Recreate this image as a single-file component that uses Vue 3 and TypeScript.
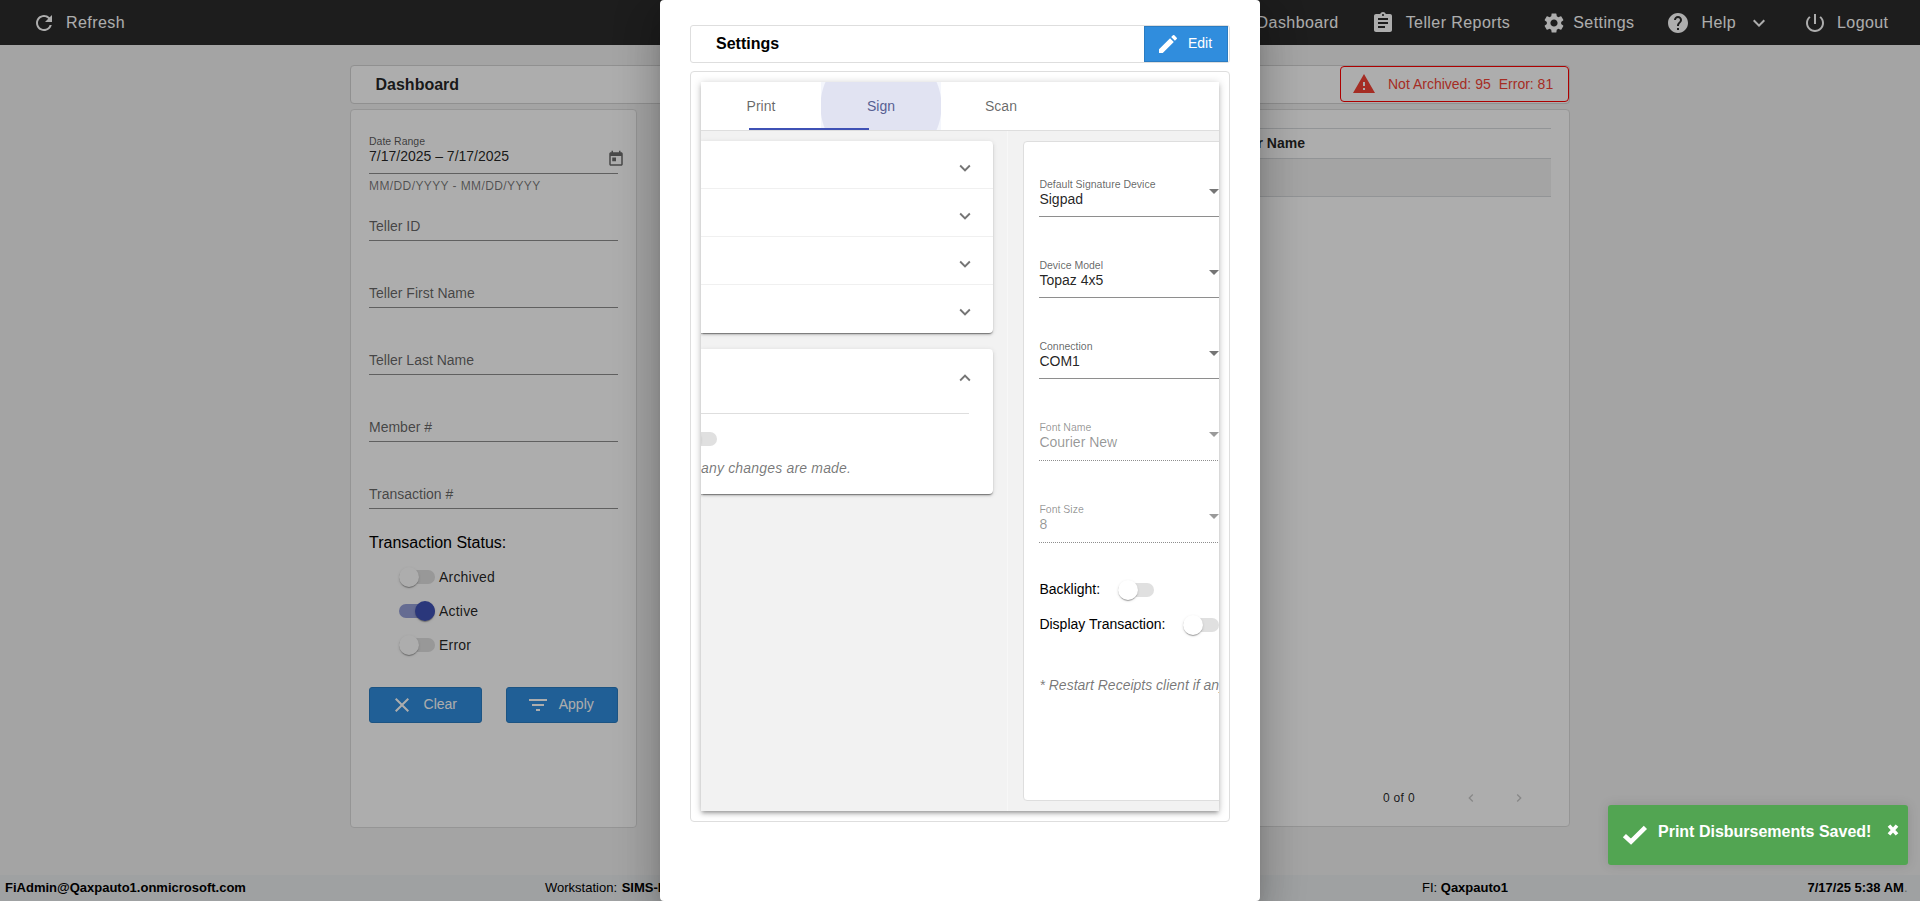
<script setup lang="ts">
interface NavItem {
  label: string
  icon: string
  cls: string
  caret?: boolean
}
interface SelectField {
  label: string
  value: string
  disabled?: boolean
}

const icons = {
  refresh:
    'M17.65 6.35A7.958 7.958 0 0 0 12 4c-4.42 0-7.99 3.58-7.99 8s3.57 8 7.99 8c3.73 0 6.84-2.55 7.73-6h-2.08A5.99 5.99 0 0 1 12 18c-3.31 0-6-2.69-6-6s2.69-6 6-6c1.66 0 3.14.69 4.22 1.78L13 11h7V4l-2.35 2.35z',
  dashboard: 'M3 13h8V3H3v10zm0 8h8v-6H3v6zm10 0h8V11h-8v10zm0-18v6h8V3h-8z',
  reports:
    'M19 3h-4.18C14.4 1.84 13.3 1 12 1s-2.4.84-2.82 2H5c-1.1 0-2 .9-2 2v14c0 1.1.9 2 2 2h14c1.1 0 2-.9 2-2V5c0-1.1-.9-2-2-2zm-7 0c.55 0 1 .45 1 1s-.45 1-1 1-1-.45-1-1 .45-1 1-1zm2 14H7v-2h7v2zm3-4H7v-2h10v2zm0-4H7V7h10v2z',
  settings:
    'M19.14 12.94c.04-.3.06-.61.06-.94 0-.32-.02-.64-.07-.94l2.03-1.58a.49.49 0 0 0 .12-.61l-1.92-3.32a.488.488 0 0 0-.59-.22l-2.39.96c-.5-.38-1.03-.7-1.62-.94l-.36-2.54a.484.484 0 0 0-.48-.41h-3.84c-.24 0-.43.17-.47.41l-.36 2.54c-.59.24-1.13.57-1.62.94l-2.39-.96c-.22-.08-.47 0-.59.22L2.74 8.87c-.12.21-.08.47.12.61l2.03 1.58c-.05.3-.09.63-.09.94s.02.64.07.94l-2.03 1.58a.49.49 0 0 0-.12.61l1.92 3.32c.12.22.37.29.59.22l2.39-.96c.5.38 1.03.7 1.62.94l.36 2.54c.05.24.24.41.48.41h3.84c.24 0 .44-.17.47-.41l.36-2.54c.59-.24 1.13-.56 1.62-.94l2.39.96c.22.08.47 0 .59-.22l1.92-3.32c.12-.22.07-.47-.12-.61l-2.01-1.58zM12 15.6c-1.98 0-3.6-1.62-3.6-3.6s1.62-3.6 3.6-3.6 3.6 1.62 3.6 3.6-1.62 3.6-3.6 3.6z',
  help: 'M12 2C6.48 2 2 6.48 2 12s4.48 10 10 10 10-4.48 10-10S17.52 2 12 2zm1 17h-2v-2h2v2zm2.07-7.75l-.9.92C13.45 12.9 13 13.5 13 15h-2v-.5c0-1.1.45-2.1 1.17-2.83l1.24-1.26c.37-.36.59-.86.59-1.41 0-1.1-.9-2-2-2s-2 .9-2 2H8c0-2.21 1.79-4 4-4s4 1.79 4 4c0 .88-.36 1.68-.93 2.25z',
  logout:
    'M13 3h-2v10h2V3zm4.83 2.17l-1.42 1.42C17.99 7.86 19 9.81 19 12c0 3.87-3.13 7-7 7s-7-3.13-7-7c0-2.19 1.01-4.14 2.58-5.42L6.17 5.17C4.23 6.82 3 9.26 3 12c0 4.97 4.03 9 9 9s9-4.03 9-9c0-2.74-1.23-5.18-3.17-6.83z',
  expand: 'M16.59 8.59L12 13.17 7.41 8.59 6 10l6 6 6-6z',
  collapse: 'M12 8l-6 6 1.41 1.41L12 10.83l4.59 4.58L18 14z',
  warning: 'M1 21h22L12 2 1 21zm12-3h-2v-2h2v2zm0-4h-2v-4h2v4z',
  today:
    'M19 3h-1V1h-2v2H8V1H6v2H5c-1.11 0-1.99.9-1.99 2L3 19c0 1.1.89 2 2 2h14c1.1 0 2-.9 2-2V5c0-1.1-.9-2-2-2zm0 16H5V8h14v11zM7 10h5v5H7z',
  close: 'M19 6.41L17.59 5 12 10.59 6.41 5 5 6.41 10.59 12 5 17.59 6.41 19 12 13.41 17.59 19 19 17.59 13.41 12z',
  filter: 'M10 18h4v-2h-4v2zM3 6v2h18V6H3zm3 7h12v-2H6v2z',
  edit: 'M3 17.25V21h3.75L17.81 9.94l-3.75-3.75L3 17.25zM20.71 7.04a.996.996 0 0 0 0-1.41l-2.34-2.34a.996.996 0 0 0-1.41 0l-1.83 1.83 3.75 3.75 1.83-1.83z',
  prev: 'M15.41 7.41L14 6l-6 6 6 6 1.41-1.41L10.83 12z',
  next: 'M10 6L8.59 7.41 13.17 12l-4.58 4.59L10 18l6-6z',
}

const nav: NavItem[] = [
  { label: 'Dashboard', icon: icons.dashboard, cls: 'n-dash' },
  { label: 'Teller Reports', icon: icons.reports, cls: 'n-rep' },
  { label: 'Settings', icon: icons.settings, cls: 'n-set' },
  { label: 'Help', icon: icons.help, cls: 'n-help', caret: true },
  { label: 'Logout', icon: icons.logout, cls: 'n-out' },
]
const filters = ['Teller ID', 'Teller First Name', 'Teller Last Name', 'Member #', 'Transaction #']
const statuses = [
  { label: 'Archived', on: false },
  { label: 'Active', on: true },
  { label: 'Error', on: false },
]
const selects: SelectField[] = [
  { label: 'Default Signature Device', value: 'Sigpad' },
  { label: 'Device Model', value: 'Topaz 4x5' },
  { label: 'Connection', value: 'COM1' },
  { label: 'Font Name', value: 'Courier New', disabled: true },
  { label: 'Font Size', value: '8', disabled: true },
]
</script>

<template>
  <div class="app">
    <header class="topbar">
      <div class="refresh">
        <svg class="ic" viewBox="0 0 24 24"><path :d="icons.refresh" /></svg>
        <span>Refresh</span>
      </div>
      <nav>
        <div v-for="n in nav" :key="n.label" class="nav-item" :class="n.cls">
          <svg class="ic" viewBox="0 0 24 24"><path :d="n.icon" /></svg>
          <span>{{ n.label }}</span>
          <svg v-if="n.caret" class="ic caret" viewBox="0 0 24 24"><path :d="icons.expand" /></svg>
        </div>
      </nav>
    </header>

    <main class="page">
      <div class="title-bar">
        <h1>Dashboard</h1>
        <div class="alert">
          <svg class="ic" viewBox="0 0 24 24"><path :d="icons.warning" /></svg>
          <span>Not Archived: 95</span><span class="err">Error: 81</span>
        </div>
      </div>
      <div class="columns">
        <section class="filters">
          <div class="date">
            <div class="date-label">Date Range</div>
            <div class="date-row">
              <span>7/17/2025 – 7/17/2025</span>
              <svg viewBox="0 0 24 24"><path :d="icons.today" /></svg>
            </div>
            <div class="hint">MM/DD/YYYY - MM/DD/YYYY</div>
          </div>
          <div v-for="f in filters" :key="f" class="field">{{ f }}</div>
          <div class="status-title">Transaction Status:</div>
          <div v-for="s in statuses" :key="s.label" class="status">
            <span class="toggle" :class="{ on: s.on }"><i></i></span>{{ s.label }}
          </div>
          <div class="actions">
            <button class="btn">
              <svg class="ic x" viewBox="0 0 24 24"><path :d="icons.close" /></svg>Clear
            </button>
            <button class="btn">
              <svg class="ic" viewBox="0 0 24 24"><path :d="icons.filter" /></svg>Apply
            </button>
          </div>
        </section>
        <section class="results">
          <div class="thead">Member Name</div>
          <div class="trow"></div>
          <div class="pager">
            <span>0 of 0</span>
            <svg viewBox="0 0 24 24"><path :d="icons.prev" /></svg>
            <svg viewBox="0 0 24 24"><path :d="icons.next" /></svg>
          </div>
        </section>
      </div>
    </main>

    <footer class="statusbar">
      <b>FiAdmin@Qaxpauto1.onmicrosoft.com</b>
      <span>Workstation: <b class="ws">SIMS-I</b></span>
      <span>FI: <b>Qaxpauto1</b></span>
      <span class="time"><b>7/17/25 5:38 AM</b><span class="dot">.</span></span>
    </footer>

    <div class="backdrop">
      <div class="dialog">
        <div class="dialog-title">
          <h2>Settings</h2>
          <button class="btn edit">
            <svg class="ic" viewBox="0 0 24 24"><path :d="icons.edit" /></svg>Edit
          </button>
        </div>
        <div class="dialog-body">
          <div class="tabs-card">
            <div class="tabs">
              <div class="tab">Print</div>
              <div class="tab pressed"><span>Sign</span></div>
              <div class="tab">Scan</div>
              <div class="ink"></div>
            </div>
            <div class="slides">
              <div class="slide-print">
                <div class="accordion">
                  <div v-for="r in 4" :key="r" class="acc-row">
                    <svg viewBox="0 0 24 24"><path :d="icons.expand" /></svg>
                  </div>
                </div>
                <div class="accordion open">
                  <div class="acc-head">
                    <svg viewBox="0 0 24 24"><path :d="icons.collapse" /></svg>
                  </div>
                  <div class="acc-body">
                    <span class="toggle"><i></i></span>
                    <p>any changes are made.</p>
                  </div>
                </div>
              </div>
              <div class="slide-sign">
                <div class="sign-card">
                  <div v-for="s in selects" :key="s.label" class="select" :class="{ disabled: s.disabled }">
                    <div class="s-label">{{ s.label }}</div>
                    <div class="s-value">{{ s.value }}</div>
                    <i class="arrow"></i>
                  </div>
                  <div class="switch">Backlight: <span class="toggle"><i></i></span></div>
                  <div class="switch second">Display Transaction: <span class="toggle"><i></i></span></div>
                  <p class="note">* Restart Receipts client if any</p>
                </div>
              </div>
            </div>
          </div>
        </div>
      </div>
    </div>

    <div class="toast">
      <svg class="check" viewBox="0 0 26 20"><path d="M2.4 10.6 9 16.6 23.4 2.4" /></svg>
      <span>Print Disbursements Saved!</span>
      <svg class="times" viewBox="0 0 12 12"><path d="M2 1.6 10 10.4M10 1.6 2 10.4" /></svg>
    </div>
  </div>
</template>

<style>
html,
body {
  margin: 0;
  overflow: hidden;
}
</style>

<style scoped>
* {
  box-sizing: border-box;
}
.app {
  position: relative;
  width: 1920px;
  height: 901px;
  overflow: hidden;
  display: flex;
  flex-direction: column;
  background: #f2f2f2;
  font: 14px/16px 'Liberation Sans', Arial, sans-serif;
  color: rgba(0, 0, 0, 0.87);
}
h1,
h2,
p {
  margin: 0;
}
svg {
  display: block;
  flex: none;
  fill: currentColor;
}
.ic {
  width: 24px;
  height: 24px;
}
.topbar {
  flex: none;
  height: 45px;
  padding: 0 31.5px 0 32px;
  display: flex;
  justify-content: space-between;
  background: #2c2c2c;
  color: #fff;
  font-size: 16px;
  line-height: 44px;
  letter-spacing: 0.42px;
}
.refresh,
.nav-item,
nav {
  display: flex;
  align-items: center;
}
.refresh span {
  margin-left: 10px;
}
.nav-item .ic {
  margin-right: 11px;
}
.n-rep,
.n-set,
.n-help,
.n-out {
  margin-left: 32px;
}
.n-set .ic {
  margin-right: 7px;
}
.n-out .ic {
  margin-right: 10px;
}
.nav-item .caret {
  margin: 0 0 0 11px;
}
.page {
  flex: 1;
  width: 1220px;
  margin: 0 auto;
  padding-top: 20px;
}
.title-bar {
  height: 39px;
  display: flex;
  justify-content: space-between;
  border: 1px solid #d4d4d4;
  border-radius: 4px;
  background: #fff;
}
h1 {
  padding-left: 24.5px;
  font-size: 16px;
  line-height: 37px;
}
.alert {
  height: 36px;
  width: 229px;
  display: flex;
  align-items: center;
  padding-left: 11px;
  border: 1px solid #f00;
  border-radius: 4px;
  color: #f44336;
}
.alert .ic {
  margin-right: 12px;
}
.err {
  margin-left: 8px;
}
.columns {
  display: flex;
  justify-content: space-between;
  margin-top: 5px;
}
.filters {
  width: 287px;
  height: 719px;
  padding: 25px 18px 0;
  border: 1px solid #dcdcdc;
  border-radius: 4px;
  background: #fff;
}
.date {
  height: 64px;
}
.date-label {
  font-size: 10.5px;
  line-height: 12px;
  color: rgba(0, 0, 0, 0.68);
}
.date-row {
  height: 27px;
  padding-top: 1px;
  display: flex;
  justify-content: space-between;
  border-bottom: 1px solid #8e8e8e;
}
.date-row svg {
  width: 18px;
  height: 18px;
  margin: 2px -7px 0 0;
  color: #6c6c6c;
}
.hint {
  margin-top: 5px;
  font-size: 12px;
  line-height: 14px;
  letter-spacing: 0.4px;
  color: rgba(0, 0, 0, 0.54);
}
.field {
  height: 67px;
  padding-top: 44px;
  border-bottom: 1px solid #8e8e8e;
  color: rgba(0, 0, 0, 0.62);
}
.date + .field {
  height: 42px;
  padding-top: 19px;
}
.status-title {
  margin: 25px 0 17px;
  font-size: 16px;
  line-height: 18px;
  color: #000;
}
.status {
  height: 34px;
  padding-left: 30px;
  display: flex;
  align-items: center;
  letter-spacing: 0.2px;
}
.status-title + .status {
  margin-top: -9px;
}
.toggle {
  position: relative;
  flex: none;
  display: block;
  width: 36px;
  height: 14px;
  border-radius: 7px;
  background: #e0e0e0;
}
.status .toggle {
  margin-right: 4px;
}
.toggle i {
  position: absolute;
  left: 0;
  top: -3px;
  width: 20px;
  height: 20px;
  border-radius: 50%;
  background: #fff;
  box-shadow: 0 2px 1px -1px rgba(0, 0, 0, 0.2), 0 1px 1px 0 rgba(0, 0, 0, 0.14), 0 1px 3px 0 rgba(0, 0, 0, 0.12);
}
.toggle.on {
  background: #959fd7;
}
.toggle.on i {
  left: 16px;
  background: #3f51b5;
}
.actions {
  display: flex;
  gap: 24px;
  margin-top: 25px;
}
.btn {
  flex: 1;
  height: 36px;
  padding: 0 4px 2px 0;
  display: flex;
  align-items: center;
  justify-content: center;
  border: 1px solid #2a7cc2;
  border-radius: 3px;
  background: #308ddd;
  color: #fff;
  font: inherit;
}
.btn .ic {
  margin-right: 9px;
  position: relative;
  top: 1px;
}
.btn .x {
  margin-right: 10px;
}
.results {
  width: 909px;
  height: 718px;
  padding: 18px 18px 0;
  display: flex;
  flex-direction: column;
  border: 1px solid #dcdcdc;
  border-radius: 4px;
  background: #fff;
}
.thead {
  height: 30px;
  padding: 6px 246px 0 0;
  border-top: 1px solid #d8dade;
  font-weight: bold;
  text-align: right;
}
.trow {
  height: 39px;
  border: 1px solid #d8dade;
  border-width: 1px 0;
  background: #f2f2f2;
}
.pager {
  margin-top: auto;
  height: 57px;
  padding: 0 24px 0 0;
  display: flex;
  align-items: center;
  justify-content: flex-end;
  font-size: 12px;
  letter-spacing: 0.35px;
}
.pager svg {
  width: 16px;
  height: 16px;
  color: #c8c8c8;
}
.pager span {
  margin-right: 48px;
}
.pager svg + svg {
  margin-left: 32px;
}
.statusbar {
  flex: none;
  height: 26px;
  padding: 0 12.5px 0 5px;
  display: grid;
  grid-template-columns: 540px 877px 1fr auto;
  background: #eaedef;
  color: #000;
  font-size: 13px;
  line-height: 25px;
}
.ws {
  margin-left: 1px;
}
.dot {
  opacity: 0.4;
}
.backdrop {
  position: absolute;
  inset: 0;
  display: flex;
  justify-content: center;
  background: rgba(0, 0, 0, 0.32);
}
.dialog {
  width: 600px;
  height: 901px;
  padding: 25px 30px 0;
  border-radius: 4px;
  background: #fff;
  box-shadow: 0 11px 15px -7px rgba(0, 0, 0, 0.2), 0 24px 38px 3px rgba(0, 0, 0, 0.14), 0 9px 46px 8px rgba(0, 0, 0, 0.12);
}
.dialog-title {
  height: 38px;
  display: flex;
  justify-content: space-between;
  padding-right: 1px;
  border: 1px solid #dedede;
  border-radius: 3px;
}
h2 {
  padding-left: 25px;
  font-size: 16px;
  line-height: 36px;
  color: #000;
}
.edit {
  flex: none;
  width: 84px;
  border-radius: 0;
}
.edit .ic {
  margin-right: 8px;
}
.dialog-body {
  height: 751px;
  margin-top: 8px;
  padding: 10px;
  border: 1px solid #dedede;
  border-radius: 4px;
}
.tabs-card {
  height: 729px;
  box-shadow: 0 3px 3px -2px rgba(0, 0, 0, 0.2), 0 3px 4px 0 rgba(0, 0, 0, 0.14), 0 1px 8px 0 rgba(0, 0, 0, 0.2);
}
.tabs {
  position: relative;
  height: 49px;
  display: flex;
  border-bottom: 1px solid #dedede;
  background: #fff;
}
.tab {
  width: 120px;
  line-height: 48px;
  text-align: center;
  color: rgba(0, 0, 0, 0.6);
}
.pressed {
  background: radial-gradient(circle at center, #e1e3f2 60px, #f4f6fc 61px);
  color: #575f92;
}
.ink {
  position: absolute;
  left: 48px;
  bottom: 0;
  width: 120px;
  height: 2px;
  background: #3f51b5;
}
.slides {
  height: 680px;
  display: flex;
  overflow: hidden;
  background: #f2f2f2;
}
.slide-print {
  flex: none;
  width: 307px;
  padding: 10px 14.5px 0 0;
  border-right: 1px solid #f7f7f7;
}
.accordion {
  border-radius: 0 4px 4px 0;
  background: #fff;
  color: #757575;
  box-shadow: 0 3px 1px -2px rgba(0, 0, 0, 0.2), 0 2px 2px 0 rgba(0, 0, 0, 0.14), 0 1px 5px 0 rgba(0, 0, 0, 0.12),
    0 1px 0 0 rgba(0, 0, 0, 0.2);
}
.acc-row {
  height: 48px;
  display: flex;
  align-items: center;
  justify-content: flex-end;
  padding: 6px 17px 0 0;
  border-bottom: 1px solid #f0f0f0;
}
.acc-row:last-child {
  border-bottom-color: transparent;
}
.accordion svg {
  width: 22px;
  height: 22px;
}
.open {
  height: 145px;
  margin-top: 16px;
}
.acc-head {
  height: 65px;
  margin-right: 24px;
  display: flex;
  justify-content: flex-end;
  border-bottom: 1px solid #dedede;
}
.acc-head svg {
  margin: 18px -7px 0 0;
}
.acc-body {
  padding-top: 18px;
}
.acc-body .toggle {
  margin-left: -20px;
}
.acc-body p {
  margin-top: 14px;
  font-style: italic;
  letter-spacing: 0.18px;
  color: rgba(0, 0, 0, 0.54);
}
.slide-sign {
  flex: none;
  padding: 10px 0 10px 15px;
}
.sign-card {
  width: 420px;
  height: 660px;
  padding: 26px 16px 0 15.4px;
  border: 1px solid #dedede;
  border-radius: 4px;
  background: #fff;
}
.select {
  position: relative;
  height: 49px;
  margin-bottom: 32px;
  padding-top: 10px;
  border-bottom: 1px solid #8e8e8e;
}
.select:nth-child(3),
.select:nth-child(4) {
  margin-bottom: 33px;
}
.s-label {
  font-size: 10.5px;
  line-height: 12px;
  color: rgba(0, 0, 0, 0.62);
}
.s-value {
  margin-top: 1px;
}
.arrow {
  position: absolute;
  left: 170px;
  top: 21px;
  border: 5px solid transparent;
  border-top-color: #757575;
  border-bottom: 0;
}
.select.disabled {
  padding-top: 9px;
  border-bottom-style: dotted;
}
.disabled .s-label,
.disabled .s-value {
  color: rgba(0, 0, 0, 0.42);
}
.disabled .arrow {
  top: 20px;
  border-top-color: #9a9a9a;
}
.switch {
  height: 35px;
  display: flex;
  align-items: center;
  color: #000;
}
.switch .toggle {
  margin: 2px 0 0 17.5px;
}
.select + .switch {
  margin-top: -4px;
}
.note {
  margin-top: 36px;
  font-style: italic;
  white-space: nowrap;
  color: rgba(0, 0, 0, 0.54);
}
.toast {
  position: absolute;
  right: 12px;
  bottom: 36px;
  width: 300px;
  height: 60px;
  display: flex;
  align-items: flex-start;
  padding: 17px 9px 0 14px;
  border-radius: 3px;
  background: #52a552;
  box-shadow: 0 0 12px rgba(0, 0, 0, 0.12);
  color: #fff;
  font-size: 16px;
  line-height: 20px;
  font-weight: bold;
}
.toast path {
  fill: none;
  stroke: currentColor;
}
.check {
  width: 26px;
  height: 20px;
  margin: 3px 10px 0 0;
  stroke-width: 4.6;
}
.times {
  width: 12px;
  height: 12px;
  margin: 2px 0 0 auto;
  stroke-width: 3.6;
}
</style>
